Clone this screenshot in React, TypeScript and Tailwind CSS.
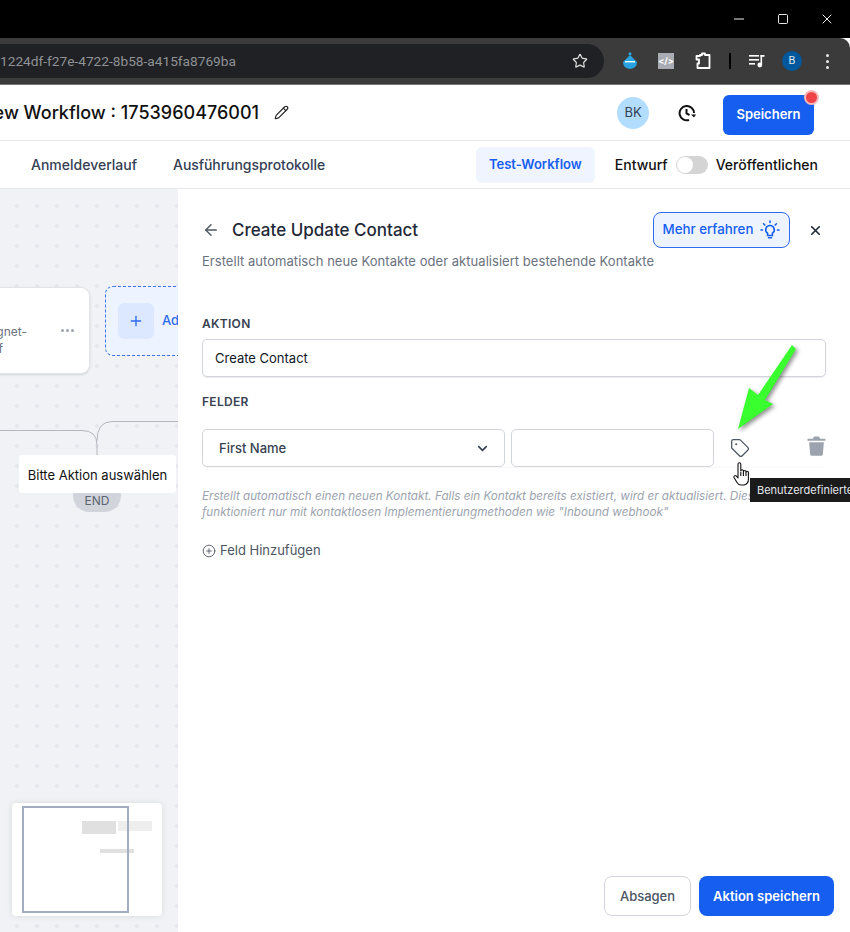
import { ArrowLeft, ChevronDown, CirclePlus, Minus, Pencil, Plus, Square, Star, Tag, X } from "lucide-react";

function ChromeToolbar() {
  return (
    <div className="flex h-[47px] shrink-0 items-center rounded-tr-[10px] border-b border-[#777] bg-[#3b3b3b] pr-[14px]">
      <div className="flex h-[34px] w-[604px] shrink-0 items-center justify-between rounded-r-full bg-[#202124] pr-[16px]">
        <span className="font-['Roboto',sans-serif] text-[13.7px] text-[#8f9296]">1224df-f27e-4722-8b58-a415fa8769ba</span>
        <Star className="h-[16px] w-[16px] text-[#e0e0e0]" strokeWidth={1.8} />
      </div>
      <div className="flex flex-1 items-center">
        {/* extension blob */}
        <svg className="ml-[18px] h-[18px] w-[16px]" viewBox="0 0 16 18">
          <circle cx="8" cy="1.8" r="1.5" fill="#29a3df" />
          <path d="M8 3 L15 10 Q15 16 8 17 Q1 16 1 10 Z" fill="#29a3df" />
          <rect x="3" y="9" width="10" height="1.4" fill="#fff" />
        </svg>
        <div className="ml-[20px] flex h-[16px] w-[16px] items-center justify-center bg-[#a9acb3] text-[9px] font-bold text-white">
          {"</>"}
        </div>
        <svg className="ml-[20px] h-[18px] w-[18px]" viewBox="0 0 18 18" fill="none" stroke="#fff" strokeWidth="1.8" strokeLinejoin="round">
          <path d="M6 3 H8 V1.5 H11 V3 H15.5 V16 H3.5 V11.5 H5 V7.5 H2.5 V4 H6 Z" />
        </svg>
        <div className="ml-[17px] h-[16px] w-[2px] bg-black" />
        <svg className="ml-[18px] h-[14px] w-[16px]" viewBox="0 0 16 14" fill="#fff">
          <rect x="0" y="1" width="10" height="1.6" />
          <rect x="0" y="5" width="10" height="1.6" />
          <rect x="0" y="9" width="6" height="1.6" />
          <rect x="11.5" y="1" width="1.6" height="10" />
          <rect x="11.5" y="1" width="4" height="1.8" />
          <circle cx="10.8" cy="11" r="2.4" />
        </svg>
        <div className="ml-[17px] flex h-[20px] w-[20px] items-center justify-center rounded-full bg-[#01579b] font-['Roboto',sans-serif] text-[11px] text-[#dfe7ef]">
          B
        </div>
        <div className="ml-[24px] flex flex-col gap-[3px]">
          <span className="h-[3px] w-[3px] rounded-full bg-[#e8e8e8]" />
          <span className="h-[3px] w-[3px] rounded-full bg-[#e8e8e8]" />
          <span className="h-[3px] w-[3px] rounded-full bg-[#e8e8e8]" />
        </div>
      </div>
    </div>
  );
}

function Canvas() {
  return (
    <div className="relative w-[178px] shrink-0 overflow-hidden bg-[#f1f2f6] bg-[radial-gradient(#e6e7ec_1.6px,transparent_1.6px)] bg-[size:20px_20px] bg-[position:7px_7px]">
      {/* connector lines */}
      <svg className="absolute left-0 top-[222px] h-[60px] w-[178px]" viewBox="0 0 178 60" fill="none" stroke="#b4b7bd">
        <path d="M0 19.5 H82 Q97 19.5 97 34 V46" />
        <path d="M97 30 Q97 10.5 112 10.5 H178" />
      </svg>

      {/* node card */}
      <div className="absolute left-[-60px] top-[98px] h-[87px] w-[150px] rounded-[9px] border border-[#e2e4e8] bg-white shadow-sm">
        <span className="absolute right-[62px] top-[35px] text-[12px] text-[#6b7280]">gnet-</span>
        <span className="absolute right-[86px] top-[52px] text-[12px] text-[#6b7280]">f</span>
        <div className="absolute right-[15px] top-[41px] flex gap-[2px]">
          <span className="h-[3px] w-[3px] rounded-full bg-[#9ca3af]" />
          <span className="h-[3px] w-[3px] rounded-full bg-[#9ca3af]" />
          <span className="h-[3px] w-[3px] rounded-full bg-[#9ca3af]" />
        </div>
      </div>

      {/* add box */}
      <div className="absolute left-[105px] top-[97px] flex h-[70px] w-[120px] items-center rounded-[8px] border border-dashed border-[#3b74ec] bg-[#eef4ff] pl-[12px]">
        <div className="flex h-[36px] w-[36px] items-center justify-center rounded-[6px] bg-[#dbe8ff]">
          <Plus className="h-[16px] w-[16px] text-[#2f6bed]" strokeWidth={2} />
        </div>
        <span className="ml-[8px] text-[13px] font-medium text-[#2f6bed]">Add</span>
      </div>

      {/* end */}
      <div className="absolute left-[73px] top-[290px] flex h-[33px] w-[48px] items-end justify-center rounded-full bg-[#d1d5db] pb-[2px] text-[12px] text-[#5d6470]">
        END
      </div>
      <div className="absolute left-[19px] top-[266px] flex h-[38px] w-[157px] items-center justify-center whitespace-nowrap rounded-[3px] bg-white pt-[3px] text-[13px] text-[#111]">
        Bitte Aktion auswählen
      </div>

      {/* minimap */}
      <div className="absolute left-[12px] top-[614px] h-[113px] w-[150px] rounded-[4px] bg-white shadow-[0_0_6px_rgba(0,0,0,0.1)]">
        <div className="absolute left-[70px] top-[18px] h-[13px] w-[34px] bg-[#e0e0e0]" />
        <div className="absolute left-[106px] top-[18px] h-[10px] w-[34px] bg-[#eeeeee]" />
        <div className="absolute left-[88px] top-[46px] h-[4px] w-[34px] bg-[#e0e0e0]" />
        <div className="absolute left-[10px] top-[3px] h-[107px] w-[107px] border-2 border-[#a3adc2]" />
      </div>
    </div>
  );
}

function Panel() {
  return (
    <div className="flex min-w-0 flex-1 flex-col bg-white pl-[24px] pr-[24px]">
      <div className="box-content flex h-[44px] shrink-0 items-center justify-between pt-[19px]">
        <div className="flex items-center">
          <ArrowLeft className="h-[18px] w-[18px] text-[#4b5563]" strokeWidth={1.8} />
          <span className="ml-[12px] mt-[2px] text-[17px] font-medium text-[#1f2937]">Create Update Contact</span>
        </div>
        <div className="flex items-center">
          <button className="flex h-[36px] w-[137px] items-center justify-center gap-[7px] rounded-[8px] border border-[#2f6bed] bg-[#eef4ff] text-[13.3px] font-medium text-[#155eef]">
            Mehr erfahren
            <svg className="h-[20px] w-[20px]" viewBox="0 0 20 20" fill="none" stroke="currentColor" strokeWidth="1.6" strokeLinecap="round">
              <path d="M10 5.5 A4.2 4.2 0 0 0 7.6 13.2 V15.5 H12.4 V13.2 A4.2 4.2 0 0 0 10 5.5 Z" />
              <path d="M8.5 17.8 H11.5" />
              <path d="M10 1 V2.5 M3.6 3.8 L4.8 5 M16.4 3.8 L15.2 5 M1 10 H2.5 M17.5 10 H19" />
            </svg>
          </button>
          <X className="ml-[18px] mr-[3px] h-[15px] w-[15px] text-[#1f2937]" strokeWidth={2.6} />
        </div>
      </div>
      <p className="mt-[-1px] whitespace-nowrap text-[13px] leading-[20px] tracking-[0.04px] text-[#6b7280]">
        Erstellt automatisch neue Kontakte oder aktualisiert bestehende Kontakte
      </p>

      <label className="mt-[45px] text-[12px] font-semibold leading-[16px] tracking-[0.3px] text-[#374151]">AKTION</label>
      <div className="mt-[7px] flex h-[38px] items-center rounded-[5px] border border-[#d1d5db] px-[12px] pt-[1px] text-[13px] text-[#111827] shadow-[0_1px_1px_rgba(0,0,0,0.08)]">
        Create Contact
      </div>

      <label className="mt-[17px] text-[12px] font-semibold leading-[16px] tracking-[0.3px] text-[#374151]">FELDER</label>
      <div className="mt-[19px] flex items-center rounded-[6px] shadow-[0_1px_1px_rgba(0,0,0,0.03)]">
        <div className="flex h-[38px] w-[303px] items-center justify-between rounded-[5px] border border-[#d1d5db] pl-[16px] pr-[14px] pt-[1px] text-[13px] font-medium text-[#374151]">
          First Name
          <ChevronDown className="h-[15px] w-[15px] text-[#374151]" strokeWidth={2.6} />
        </div>
        <div className="ml-[6px] h-[38px] w-[203px] rounded-[5px] border border-[#d1d5db]" />
        <Tag className="ml-[16px] h-[20px] w-[20px] text-[#4b5563]" strokeWidth={1.5} />
        <svg className="mb-[4px] ml-[57px] h-[20px] w-[19px]" viewBox="0 0 18 19" fill="#9ca3af">
          <path d="M6 1.5 Q6.3 0.5 7.5 0.5 H10.5 Q11.7 0.5 12 1.5 L12.3 2.5 H17.5 V4.5 H0.5 V2.5 H5.7 Z" />
          <path d="M2 6 H16 L15 17.5 Q14.8 18.7 13.5 18.7 H4.5 Q3.2 18.7 3 17.5 Z" />
        </svg>
      </div>

      <p className="mt-[21px] w-[640px] text-[11.7px] italic leading-[16px] text-[#9ca3af]">
        Erstellt automatisch einen neuen Kontakt. Falls ein Kontakt bereits existiert, wird er aktualisiert. Dieser
        <br />
        funktioniert nur mit kontaktlosen Implementierungmethoden wie "Inbound webhook"
      </p>

      <div className="mt-[21px] flex items-center text-[13px] text-[#4b5563]">
        <CirclePlus className="h-[14px] w-[14px]" strokeWidth={1.5} />
        <span className="ml-[4px]">Feld Hinzufügen</span>
      </div>

      <div className="mb-[16px] mr-[-8px] mt-auto flex justify-end gap-[8px]">
        <button className="h-[40px] w-[87px] rounded-[8px] border border-[#d1d5db] bg-white pt-[1px] text-[13px] font-medium text-[#4b5563]">
          Absagen
        </button>
        <button className="h-[40px] w-[135px] rounded-[8px] bg-[#155eef] pt-[1px] text-[13px] font-semibold text-white">
          Aktion speichern
        </button>
      </div>
    </div>
  );
}

export default function App() {
  return (
    <div className="relative flex h-[932px] w-[850px] flex-col overflow-hidden bg-white font-['Inter',sans-serif]">
      {/* window frame */}
      <div className="flex h-[38px] shrink-0 items-center justify-end bg-black pr-[15px] text-white">
        <Minus className="h-[16px] w-[16px]" strokeWidth={1.4} />
        <Square className="ml-[30px] h-[12px] w-[12px]" strokeWidth={1.8} />
        <X className="ml-[30px] h-[16px] w-[16px]" strokeWidth={1.4} />
      </div>
      <ChromeToolbar />

      {/* workflow header */}
      <div className="flex h-[56px] shrink-0 items-center border-b border-[#e5e7eb] pr-[36px]">
        <span className="ml-[-20px] whitespace-nowrap text-[18px] font-medium text-[#111]">New Workflow : 1753960476001</span>
        <Pencil className="ml-[15px] h-[15px] w-[15px] text-[#222]" strokeWidth={1.8} />
        <div className="ml-auto flex h-[32px] w-[32px] items-center justify-center rounded-full bg-[#b2ddff] text-[13px] text-[#344054]">
          BK
        </div>
        <svg className="ml-[29px] h-[18px] w-[18px]" viewBox="0 0 18 18" fill="none" stroke="#111" strokeWidth="2">
          <path d="M16 9 A7.2 7.2 0 1 0 11 16" />
          <path d="M8.5 5 V9.5 L11.5 11" />
          <path d="M13 10.5 L16 13.5 L18 10.5" fill="#111" stroke="none" />
        </svg>
        <div className="relative ml-[27px] mt-[4px]">
          <button className="h-[40px] w-[91px] rounded-[6px] bg-[#155eef] text-[13px] font-semibold text-white">Speichern</button>
          <span className="absolute right-[-5px] top-[-5px] h-[15px] w-[15px] rounded-full border-[2px] border-[#f7b8bc] bg-[#f04348]" />
        </div>
      </div>

      {/* tabs */}
      <div className="flex h-[48px] shrink-0 items-center border-b border-[#e5e7eb] pl-[31px] pr-[32px]">
        <span className="text-[14px] font-medium text-[#344054]">Anmeldeverlauf</span>
        <span className="ml-[36px] text-[14px] font-medium tracking-[-0.05px] text-[#344054]">Ausführungsprotokolle</span>
        <div className="ml-auto flex h-[36px] w-[119px] items-center justify-center rounded-[6px] bg-[#eff4ff] pt-[1px] text-[13px] font-semibold text-[#155eef]">
          Test-Workflow
        </div>
        <span className="ml-[20px] text-[14px] font-medium text-[#111]">Entwurf</span>
        <div className="ml-[8px] flex h-[18px] w-[32px] items-center rounded-full bg-[#d4d4d4] pl-[1px]">
          <span className="h-[16px] w-[16px] rounded-full bg-white" />
        </div>
        <span className="ml-[8px] text-[14px] font-medium text-[#111]">Veröffentlichen</span>
      </div>

      <div className="flex min-h-0 flex-1">
        <Canvas />
        <Panel />
      </div>

      {/* screenshot annotations */}
      <svg className="absolute left-[730px] top-[340px] h-[96px] w-[76px] drop-shadow-[2px_2px_2px_rgba(0,0,0,0.45)]" viewBox="730 340 76 96">
        <polygon points="792,345 796,349 765,400 773,404 738,429 749,388 758,395" fill="#39ff2e" />
      </svg>
      <svg className="absolute left-[733px] top-[462px] h-[24px] w-[17px]" viewBox="0 0 17 24" fill="#fff" stroke="#111" strokeWidth="1.1" strokeLinejoin="round">
        <path d="M5 10 V2.2 a1.4 1.4 0 0 1 2.8 0 V9 a1.3 1.3 0 0 1 2.6 0 V9.8 a1.3 1.3 0 0 1 2.6 0 V10.5 a1.2 1.2 0 0 1 2.4 0 V16 Q15.8 22 11 23 H8 Q5.5 23 4 20.5 L1 15.5 a1.4 1.4 0 0 1 2.2 -1.6 L5 16 Z" />
        <path d="M7.8 10 V14 M10.4 10 V14 M13 10.5 V14" fill="none" />
      </svg>
      <div className="absolute left-[750px] top-[478px] flex h-[24px] w-[120px] items-center whitespace-nowrap bg-[#1b1b1b] pl-[7px] text-[11px] text-[#e5e7eb]">
        Benutzerdefinierte Werte
      </div>
    </div>
  );
}
